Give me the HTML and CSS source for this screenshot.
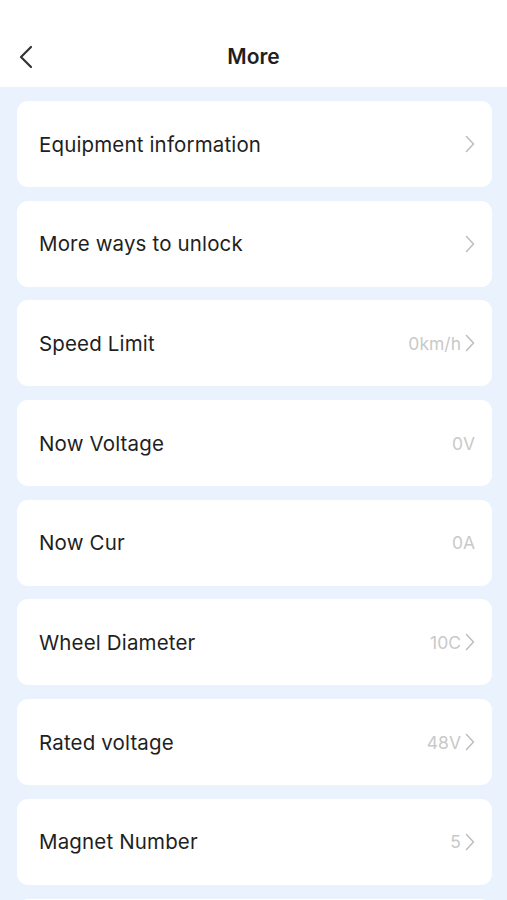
FILE: index.html
```html
<!DOCTYPE html>
<html lang="en">
<head>
  <meta charset="UTF-8" />
  <meta name="viewport" content="width=device-width, initial-scale=1.0"/>
  <title>More</title>
  <link rel="stylesheet" href="styles.css">
</head>
<body>
  <header class="topbar">
    <a class="back" href="#">
      <svg width="14" height="24" viewBox="0 0 14 24"><path d="M12 2 L2 12 L12 22" fill="none" stroke="#333" stroke-width="2.2" stroke-linecap="round" stroke-linejoin="round"/></svg>
    </a>
    <h1>More</h1>
  </header>

  <main class="list">
    <div class="item"><span class="label">Equipment information</span><span class="right"><svg class="chev" viewBox="0 0 10 18"><path d="M1.5 1.5 L8.5 9 L1.5 16.5"/></svg></span></div>
    <div class="item"><span class="label">More ways to unlock</span><span class="right"><svg class="chev" viewBox="0 0 10 18"><path d="M1.5 1.5 L8.5 9 L1.5 16.5"/></svg></span></div>
    <div class="item"><span class="label">Speed Limit</span><span class="right"><span class="value">0km/h</span><svg class="chev" viewBox="0 0 10 18"><path d="M1.5 1.5 L8.5 9 L1.5 16.5"/></svg></span></div>
    <div class="item"><span class="label">Now Voltage</span><span class="right"><span class="value">0V</span></span></div>
    <div class="item"><span class="label">Now Cur</span><span class="right"><span class="value">0A</span></span></div>
    <div class="item"><span class="label">Wheel Diameter</span><span class="right"><span class="value">10C</span><svg class="chev" viewBox="0 0 10 18"><path d="M1.5 1.5 L8.5 9 L1.5 16.5"/></svg></span></div>
    <div class="item"><span class="label">Rated voltage</span><span class="right"><span class="value">48V</span><svg class="chev" viewBox="0 0 10 18"><path d="M1.5 1.5 L8.5 9 L1.5 16.5"/></svg></span></div>
    <div class="item"><span class="label">Magnet Number</span><span class="right"><span class="value">5</span><svg class="chev" viewBox="0 0 10 18"><path d="M1.5 1.5 L8.5 9 L1.5 16.5"/></svg></span></div>
    <div class="item"></div>
  </main>
</body>
</html>
```

FILE: styles.css
```css
:root {
  --bg: #e9f2fd;
  --text: #1f1f1f;
  --muted: #c9c9c9;
}

body {
  margin: 0;
  font-family: 'Inter', 'Liberation Sans', sans-serif;
  background-color: var(--bg);
  color: var(--text);
  height: 900px;
  overflow: hidden;
}

.topbar {
  position: relative;
  background-color: white;
  height: 87px;
  display: flex;
  align-items: flex-end;
  justify-content: center;
}

.topbar h1 {
  margin: 0 0 17px;
  font-size: 21px;
  font-weight: 600;
  line-height: 26px;
}

.back {
  position: absolute;
  left: 19px;
  top: 45px;
  display: block;
  line-height: 0;
}

.list {
  display: flex;
  flex-direction: column;
  gap: 13.7px;
  padding: 14px 15px 0 17px;
}

.item {
  background-color: white;
  border-radius: 11px;
  height: 86px;
  display: flex;
  align-items: center;
  justify-content: space-between;
  padding: 0 17px 0 22px;
  flex-shrink: 0;
}

.label {
  font-size: 20.5px;
  letter-spacing: 0.15px;
}

.right {
  display: flex;
  align-items: center;
  gap: 4px;
}

.value {
  color: var(--muted);
  font-size: 17.5px;
}

.chev {
  width: 10px;
  height: 18px;
}

.chev path {
  fill: none;
  stroke: #bdbdbd;
  stroke-width: 1.5;
  stroke-linecap: round;
  stroke-linejoin: round;
}
```
